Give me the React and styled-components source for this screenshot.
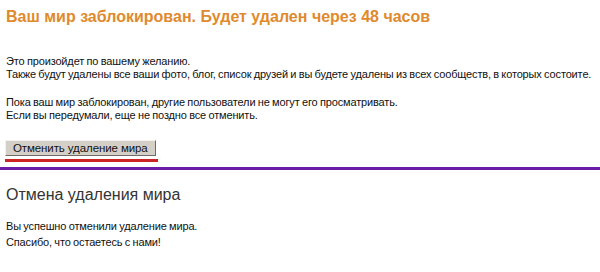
import React from "react";
import styled, { createGlobalStyle } from "styled-components";

const Global = createGlobalStyle`
  html, body { margin: 0; padding: 0; background: #fff; }
  body { font-family: "Liberation Sans", Arial, sans-serif; }
`;

const Page = styled.div`
  width: 600px;
  height: 272px;
  overflow: hidden;
  display: flex;
  flex-direction: column;
`;

const Section = styled.section`
  padding: 0 6px;
  display: flex;
  flex-direction: column;
  align-items: flex-start;
`;

const Title = styled.h1`
  margin: 7px 0 0;
  font-size: 16px;
  line-height: 20px;
  font-weight: bold;
  color: #e08a2e;
`;

const SubTitle = styled.h2`
  margin: 15px 0 0;
  font-size: 16px;
  line-height: 20px;
  font-weight: normal;
  color: #333;
`;

const Para = styled.p`
  margin: ${(p) => p.$top}px 0 0;
  font-size: 11px;
  line-height: ${(p) => p.$lh || 13}px;
  letter-spacing: -0.15px;
  word-spacing: -0.5px;
  white-space: nowrap;
  color: #111;
`;

const ButtonWrap = styled.div`
  margin-top: 18px;
  display: flex;
  flex-direction: column;
  gap: 3px;
  margin-left: -1px;
`;

const Button = styled.button`
  height: 16px;
  padding: 0 7px;
  margin: 0;
  background: #d4d0c8;
  border: 1px solid;
  border-color: #f4f2ee #6e6c68 #6e6c68 #f4f2ee;
  font-family: "Liberation Sans", Arial, sans-serif;
  font-size: 11.5px;
  letter-spacing: -0.1px;
  line-height: 14px;
  color: #111;
  cursor: pointer;
`;

const RedLine = styled.div`
  height: 3px;
  margin-right: -2px;
  background: #cc2424;
`;

const Divider = styled.div`
  margin-top: 5px;
  height: 3px;
  background: #6a1ea8;
`;

export default function App() {
  return (
    <Page>
      <Global />
      <Section>
        <Title>Ваш мир заблокирован. Будет удален через 48 часов</Title>
        <Para $top={28}>
          Это произойдет по вашему желанию.
          <br />
          Также будут удалены все ваши фото, блог, список друзей и вы будете удалены из всех сообществ, в которых состоите.
        </Para>
        <Para $top={15}>
          Пока ваш мир заблокирован, другие пользователи не могут его просматривать.
          <br />
          Если вы передумали, еще не поздно все отменить.
        </Para>
        <ButtonWrap>
          <Button>Отменить удаление мира</Button>
          <RedLine />
        </ButtonWrap>
      </Section>
      <Divider />
      <Section>
        <SubTitle>Отмена удаления мира</SubTitle>
        <Para $top={13} $lh={16}>
          Вы успешно отменили удаление мира.
          <br />
          Спасибо, что остаетесь с нами!
        </Para>
      </Section>
    </Page>
  );
}
